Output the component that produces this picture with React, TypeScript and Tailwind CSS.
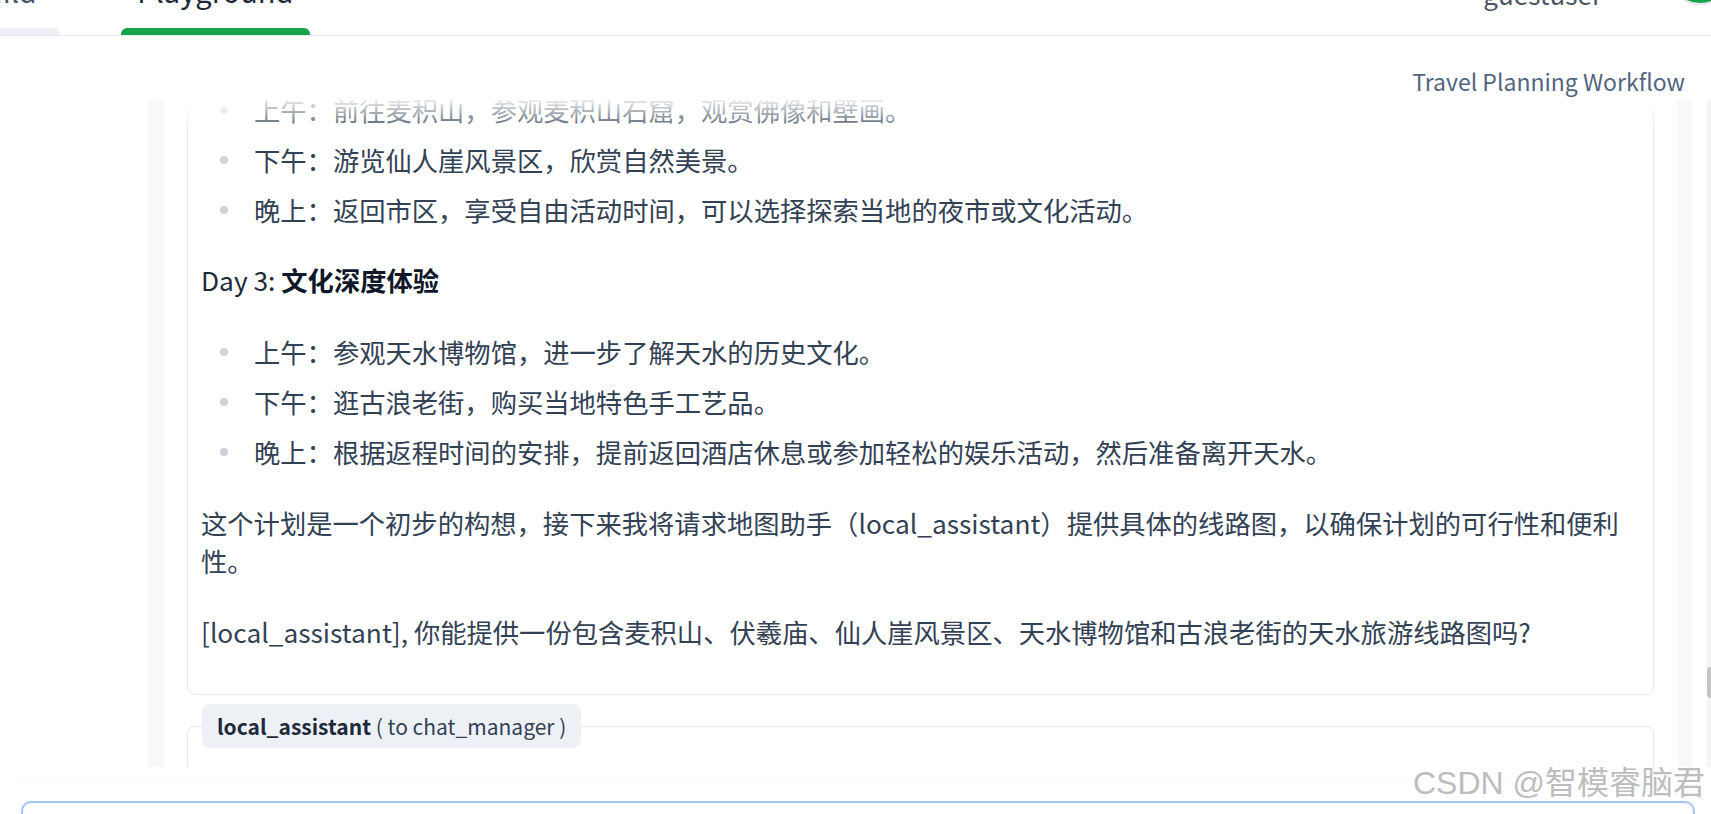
import React from "react";

const dayTwo = [
  "上午：前往麦积山，参观麦积山石窟，观赏佛像和壁画。",
  "下午：游览仙人崖风景区，欣赏自然美景。",
  "晚上：返回市区，享受自由活动时间，可以选择探索当地的夜市或文化活动。",
];

const dayThree = [
  "上午：参观天水博物馆，进一步了解天水的历史文化。",
  "下午：逛古浪老街，购买当地特色手工艺品。",
  "晚上：根据返程时间的安排，提前返回酒店休息或参加轻松的娱乐活动，然后准备离开天水。",
];

const Bullets = ({ items, className }: { items: string[]; className?: string }) => (
  <ul className={"flex flex-col gap-[12px] " + (className ?? "")}>
    {items.map((t) => (
      <li key={t} className="flex items-center">
        <span className="ml-[19px] mr-[26px] h-[8px] w-[8px] shrink-0 rounded-full bg-[#cdd1d8]" />
        <span>{t}</span>
      </li>
    ))}
  </ul>
);

const App = () => {
  return (
    <div className="relative h-[814px] w-full overflow-hidden bg-white font-['Noto_Sans_CJK_SC','Noto_Sans',sans-serif]">
      {/* top nav, scrolled partly off the page */}
      <header className="flex h-[36px] items-end overflow-hidden border-b border-[#e6ebf1]">
        <div className="ml-[-57px] flex items-end gap-[61px]">
          <div className="flex flex-col items-center">
            <span className="px-[23px] text-[29px] leading-none text-[#475569]">Build</span>
            <span className="mt-[23px] h-[7px] w-full rounded-t-md bg-[#edf1f5]" />
          </div>
          <div className="flex w-[189px] flex-col items-center">
            <span className="text-[29px] leading-none text-[#1f2937]">Playground</span>
            <span className="mt-[23px] h-[7px] w-full rounded-t-md bg-[#16a34a]" />
          </div>
        </div>
        <div className="ml-auto mr-[-21px] flex items-end">
          <span className="mb-[28px] text-[26px] leading-none text-[#4b5563]">guestuser</span>
          <span className="mb-[30px] ml-[66px] h-[64px] w-[64px] rounded-full border-2 border-[#e5e7eb] bg-[#16a34a]" />
        </div>
      </header>

      <div className="flex h-[64px] justify-end pr-[26px] pt-[26px]">
        <h1 className="text-[23px] leading-[38px] text-[#52657f]">Travel Planning Workflow</h1>
      </div>

      <div className="flex h-[667px]">
        <div className="w-[148px] shrink-0" />
        <div className="flex w-[1544px] shrink-0 bg-[#f8f9fb] pl-[16px] pr-[15px]">
          <div className="relative flex-1 overflow-hidden bg-white px-[23px] text-[26.3px] leading-[38px] text-[#334155]">
            <div className="pointer-events-none absolute inset-x-0 top-0 z-10 h-[34px] bg-linear-to-b from-white/90 to-white/0" />

            <div className="-mt-[10px] rounded-lg border border-[#e5e7eb] pb-[43px] pl-[13px] pr-[26px]">
              <Bullets items={dayTwo} />
              <p className="mt-[32px] text-[#1e293b]">
                Day 3: <strong className="font-bold text-[#0f172a]">文化深度体验</strong>
              </p>
              <Bullets items={dayThree} className="mt-[34px]" />
              <p className="mt-[33px]">
                这个计划是一个初步的构想，接下来我将请求地图助手（local_assistant）提供具体的线路图，以确保计划的可行性和便利性。
              </p>
              <p className="mt-[33px]">
                [local_assistant], 你能提供一份包含麦积山、伏羲庙、仙人崖风景区、天水博物馆和古浪老街的天水旅游线路图吗?
              </p>
            </div>

            <div className="relative z-[1] ml-[15px] mt-[9px] flex h-[44px] w-fit items-center rounded-lg bg-[#edf1f5] px-[15px] text-[21px] leading-none">
              <span className="font-semibold text-[#1e293b]">local_assistant</span>
              <span className="whitespace-pre text-[#334155]"> ( to chat_manager )</span>
            </div>
            <div className="-mt-[22px] h-[100px] rounded-lg border border-[#e5e7eb]" />
          </div>
        </div>
        <div className="w-[15px] shrink-0" />
        <div className="w-[4px] shrink-0 rounded-tl bg-[#f1f3f5]">
          <div className="mt-[567px] h-[31px] rounded-l bg-[#c4c4c4]" />
        </div>
      </div>

      {/* chat input */}
      <div className="pt-[16px]">
        <div className="ml-[8px] rounded-tl-lg px-[13px] pt-[18px] shadow-[0_-1px_3px_rgba(15,23,42,0.02)]">
          <div className="mr-[3px] h-[60px] rounded-[10px] border-2 border-[#a3c4f7] bg-white" />
        </div>
      </div>

      <div className="pointer-events-none absolute right-[6px] top-[763px] font-['Liberation_Sans','Noto_Sans_CJK_SC',sans-serif] text-[32px] leading-[40px] text-[#bdbdbd] [text-shadow:0_0_2px_#fff,0_0_2px_#fff]">
        CSDN @智模睿脑君
      </div>
    </div>
  );
};

export default App;
